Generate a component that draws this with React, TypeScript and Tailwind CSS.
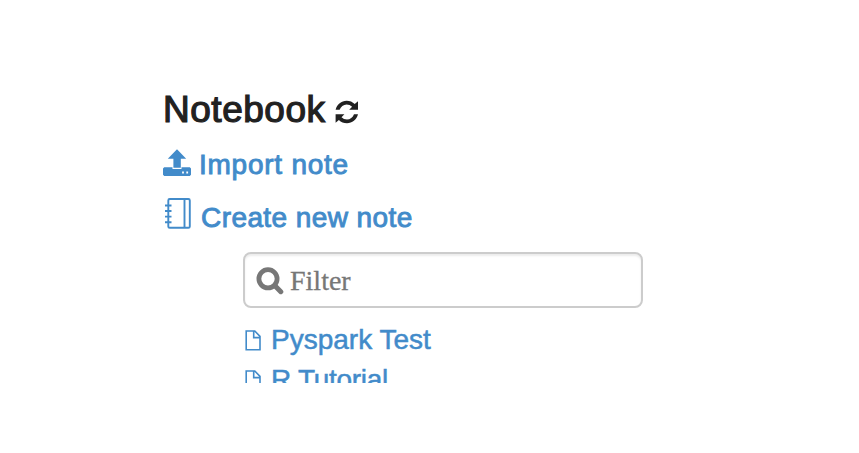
const REFRESH_HALF =
  "M.6 9.8C2 4.5 6.4.8 11.6.8c3.2 0 6 1.2 8.1 3.3L23 1.3v8.4h-8.8l2.9-2.9a7.7 7.7 0 0 0-5.5-2.3C8.4 4.5 5.8 6.7 4.6 9.8Z";

const Refresh = () => (
  <svg className="ml-[9.5px] mt-[5px] size-6" viewBox="0 0 24 24" fill="#212121">
    <path d={REFRESH_HALF} />
    <path d={REFRESH_HALF} transform="rotate(180 11.8 12)" />
  </svg>
);

const Upload = () => (
  <svg className="h-7 w-7" viewBox="0 0 28 28" fill="#428bca">
    <path d="M14 .2 23.2 9.8h-5.4v8.9h-7.4V9.8H4.8Z" />
    <path fillRule="evenodd" d="M1.2 18.3h8.3v1.6h9v-1.6h8.3L28 19.5v6.3L26.8 27H1.2L0 25.8v-6.3ZM19.1 22.6v1.8h1.8v-1.8Zm4.2 0v1.8h1.8v-1.8Z" />
  </svg>
);

const NotebookIcon = () => (
  <svg className="h-8 w-7" viewBox="0 0 28 32" fill="none" stroke="#428bca" strokeWidth="1.9">
    <rect x="5.3" y="2" width="21.5" height="28.8" rx="1.4" />
    <path d="M21.5 2V30.8M2 8.5h6.5M2 14h6.5M2 19.6h6.5M2 25.2h6.5" />
  </svg>
);

const FileIcon = () => (
  <svg className="h-[21px] w-4" viewBox="0 0 16 21" fill="none" stroke="#428bca" strokeWidth="1.6">
    <path d="M1.2 1h8.6L15 6.4v13.4H1.2ZM8.7 1v6.6H15" />
  </svg>
);

const SearchIcon = () => (
  <svg className="mt-0.5 h-7 w-7" viewBox="0 0 28 28" fill="none" stroke="#777">
    <circle cx="12" cy="11.8" r="9.1" strokeWidth="4.8" />
    <path d="m18.7 18.5 6.1 6.2" strokeWidth="5" strokeLinecap="round" />
  </svg>
);

const notes = [
  { name: "Pyspark Test", spacing: "tracking-[0px]" },
  { name: "R Tutorial", spacing: "tracking-[-0.28px]" },
];

export default function App() {
  return (
    <main className="h-[453px] w-[859px] overflow-hidden bg-white pl-[163px] pt-[85px] font-['Liberation_Sans',sans-serif] text-[28px] text-[#428bca]">
      <section className="h-[298px] w-[500px] overflow-hidden">
        <h1 className="flex h-[49px] items-center text-[37px] text-[#212121]">
          <span className="tracking-[0.52px] [-webkit-text-stroke:1.2px_#212121]">Notebook</span>
          <Refresh />
        </h1>
        <div className="mt-[15px] flex h-7 items-center gap-2">
          <Upload />
          <span className="mt-[3px] whitespace-nowrap leading-8 tracking-[0.75px] [-webkit-text-stroke:0.9px_#428bca]">Import note</span>
        </div>
        <div className="mt-5 flex h-8 items-center gap-[10px]">
          <NotebookIcon />
          <span className="mt-[10px] whitespace-nowrap leading-8 tracking-[0.42px] [-webkit-text-stroke:0.9px_#428bca]">Create new note</span>
        </div>
        <div className="ml-20 mt-[23px] flex h-14 w-[400px] items-center rounded-lg border-2 border-[#ccc] pl-[11px] text-[#777] shadow-[inset_0_2px_2px_rgba(0,0,0,0.075)]">
          <SearchIcon />
          <span className="ml-[6px] mt-0.5 font-['Liberation_Serif',serif] text-[28px] leading-8 [-webkit-text-stroke:0.3px_#777]">Filter</span>
        </div>
        <ul className="ml-[82px] mt-3">
          {notes.map(({ name, spacing }) => (
            <li key={name} className="flex h-10 items-center gap-[10px]">
              <FileIcon />
              <span className={`whitespace-nowrap [-webkit-text-stroke:0.5px_#428bca] ${spacing}`}>{name}</span>
            </li>
          ))}
        </ul>
      </section>
    </main>
  );
}
